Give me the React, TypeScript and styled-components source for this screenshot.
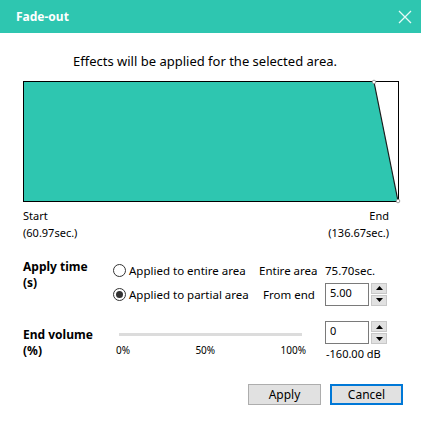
import React from "react";
import styled, { createGlobalStyle } from "styled-components";

const Global = createGlobalStyle`
  html, body { margin: 0; padding: 0; background: #fff; }
  body { font-family: "Noto Sans", "Open Sans", sans-serif; font-size: 11.5px; color: #000; }
  * { box-sizing: border-box; }
`;

const Dialog = styled.div`
  width: 421px;
  height: 424px;
  background: #fff;
  display: flex;
  flex-direction: column;
`;

const TitleBar = styled.div`
  height: 33px;
  background: #2ec6b0;
  color: #fff;
  display: flex;
  align-items: center;
  justify-content: space-between;
  padding: 0 8px 0 16px;
`;

const Title = styled.span`
  font-weight: 700;
  font-size: 12px;
`;

const CloseBtn = styled.div`
  width: 16px;
  height: 16px;
  display: flex;
  align-items: center;
  justify-content: center;
`;

const Body = styled.div`
  padding: 0 22px 0 23px;
  display: flex;
  flex-direction: column;
`;

const Message = styled.div`
  text-align: center;
  font-size: 13px;
  line-height: 16px;
  margin-top: 20px;
  padding-right: 12px;
`;

const Chart = styled.div`
  margin-top: 12px;
  width: 376px;
  height: 121px;
  border: 1px solid #000;
  position: relative;
  overflow: visible;
`;

const ChartSvg = styled.svg`
  position: absolute;
  left: -1px;
  top: -1px;
  overflow: visible;
`;

const Ends = styled.div`
  display: flex;
  justify-content: space-between;
  width: 366px;
  margin-top: 5px;
  font-size: 11px;
  line-height: 17px;
`;

const EndCol = styled.div<{ $right?: boolean }>`
  display: flex;
  flex-direction: column;
  align-items: ${(p) => (p.$right ? "flex-end" : "flex-start")};
`;

const Form = styled.div`
  margin-top: 18px;
  display: grid;
  grid-template-columns: 90px 146px 66px auto;
  grid-template-rows: 22px 26px;
  align-items: center;
`;

const Label = styled.div`
  font-weight: 700;
  font-size: 12px;
  line-height: 16px;
  align-self: start;
`;

const Radio = styled.label`
  display: flex;
  align-items: center;
  gap: 3px;
  white-space: nowrap;
`;

const RadioCircle = styled.span<{ $on?: boolean }>`
  width: 13px;
  height: 13px;
  border-radius: 50%;
  border: 1px solid #333;
  background: #fff;
  display: flex;
  align-items: center;
  justify-content: center;
  &::after {
    content: "";
    display: ${(p) => (p.$on ? "block" : "none")};
    width: 7px;
    height: 7px;
    border-radius: 50%;
    background: #333;
  }
`;

const Cell = styled.div<{ $pl?: number }>`
  white-space: nowrap;
  padding-left: ${(p) => p.$pl ?? 0}px;
`;

const SpinWrap = styled.div`
  display: flex;
  align-items: center;
  gap: 2px;
`;

const NumBox = styled.div`
  width: 44px;
  height: 23px;
  border: 1px solid #7a7a7a;
  background: #fff;
  font-size: 11px;
  padding: 2px 0 0 4px;
  line-height: 14px;
`;

const Spin = styled.div`
  display: flex;
  flex-direction: column;
  gap: 1px;
`;

const SpinBtn = styled.div`
  width: 16px;
  height: 11px;
  background: #e1e1e1;
  border: 1px solid #c8c8c8;
  display: flex;
  align-items: center;
  justify-content: center;
`;

const VolRow = styled.div`
  margin-top: 20px;
  display: grid;
  grid-template-columns: 90px 212px auto;
`;

const SliderArea = styled.div`
  display: flex;
  flex-direction: column;
  padding-top: 6px;
`;

const Track = styled.div`
  margin-left: 6px;
  width: 183px;
  height: 3px;
  background: #dcdcdc;
`;

const Ticks = styled.div`
  display: flex;
  justify-content: space-between;
  width: 190px;
  margin-top: 7px;
  margin-left: 3px;
  font-size: 10px;
  line-height: 14px;
`;

const VolInput = styled.div`
  display: flex;
  flex-direction: column;
  gap: 3px;
  margin-top: -6px;
`;

const Db = styled.div`
  font-size: 11px;
  line-height: 14px;
  padding-left: 1px;
`;

const Buttons = styled.div`
  margin-top: 23px;
  margin-right: -4px;
  display: flex;
  justify-content: flex-end;
  gap: 9px;
`;

const Button = styled.div<{ $primary?: boolean }>`
  width: 73px;
  height: 21px;
  background: #e1e1e1;
  border: ${(p) => (p.$primary ? "2px solid #0078d7" : "1px solid #adadad")};
  display: flex;
  align-items: center;
  justify-content: center;
  font-size: 12px;
`;

const Up = () => (
  <svg width="7" height="4" viewBox="0 0 7 4"><path d="M0 4 L3.5 0 L7 4 Z" fill="#000" /></svg>
);
const Down = () => (
  <svg width="7" height="4" viewBox="0 0 7 4"><path d="M0 0 L3.5 4 L7 0 Z" fill="#000" /></svg>
);

export default function App() {
  return (
    <Dialog>
      <Global />
      <TitleBar>
        <Title>Fade-out</Title>
        <CloseBtn>
          <svg width="14" height="14" viewBox="0 0 14 14">
            <path d="M1 1 L13 13 M13 1 L1 13" stroke="#e6fbf7" strokeWidth="1.3" />
          </svg>
        </CloseBtn>
      </TitleBar>
      <Body>
        <Message>Effects will be applied for the selected area.</Message>
        <Chart>
          <ChartSvg width="376" height="121" viewBox="0 0 376 121">
            <polygon points="1,1 351,1 375,120 1,120" fill="#2ec6b0" />
            <line x1="351" y1="1" x2="375" y2="120" stroke="#1a1a1a" strokeWidth="1.2" />
            <circle cx="351" cy="1" r="1.8" fill="#fff" stroke="#888" strokeWidth="0.8" />
            <circle cx="375" cy="120" r="1.8" fill="#fff" stroke="#888" strokeWidth="0.8" />
          </ChartSvg>
        </Chart>
        <Ends>
          <EndCol>
            <span>Start</span>
            <span>(60.97sec.)</span>
          </EndCol>
          <EndCol $right>
            <span>End</span>
            <span>(136.67sec.)</span>
          </EndCol>
        </Ends>
        <Form>
          <Label style={{ gridRow: "1 / span 2" }}>
            Apply time
            <br />
            (s)
          </Label>
          <Radio>
            <RadioCircle />
            Applied to entire area
          </Radio>
          <Cell>Entire area</Cell>
          <Cell>75.70sec.</Cell>
          <Radio>
            <RadioCircle $on />
            Applied to partial area
          </Radio>
          <Cell $pl={4}>From end</Cell>
          <SpinWrap>
            <NumBox>5.00</NumBox>
            <Spin>
              <SpinBtn><Up /></SpinBtn>
              <SpinBtn><Down /></SpinBtn>
            </Spin>
          </SpinWrap>
        </Form>
        <VolRow>
          <Label>
            End volume
            <br />
            (%)
          </Label>
          <SliderArea>
            <Track />
            <Ticks>
              <span>0%</span>
              <span>50%</span>
              <span>100%</span>
            </Ticks>
          </SliderArea>
          <VolInput>
            <SpinWrap>
              <NumBox>0</NumBox>
              <Spin>
                <SpinBtn><Up /></SpinBtn>
                <SpinBtn><Down /></SpinBtn>
              </Spin>
            </SpinWrap>
            <Db>-160.00 dB</Db>
          </VolInput>
        </VolRow>
        <Buttons>
          <Button>Apply</Button>
          <Button $primary>Cancel</Button>
        </Buttons>
      </Body>
    </Dialog>
  );
}
